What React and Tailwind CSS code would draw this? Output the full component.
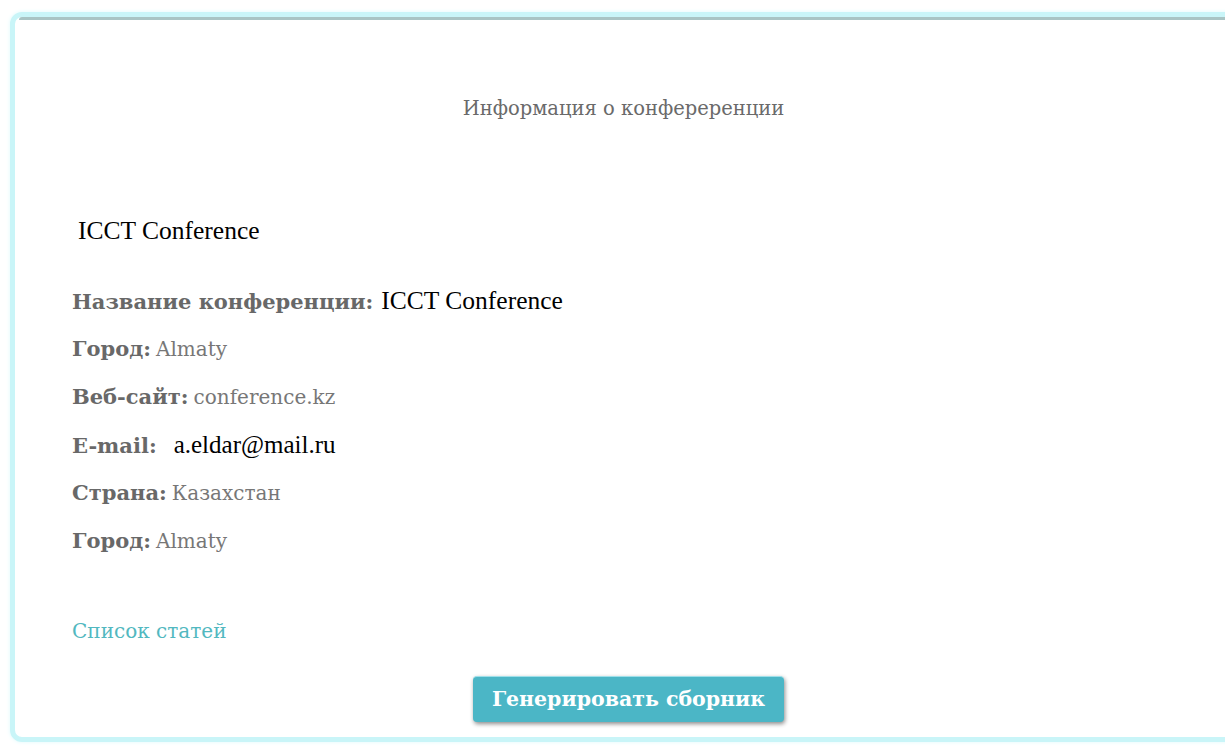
import React from 'react';

const cambria = { fontFamily: '"DejaVu Serif", "Liberation Serif", serif' };
const times = { fontFamily: '"Liberation Serif", "DejaVu Serif", serif' };

const rows = [
  { label: 'Город:', value: 'Almaty' },
  { label: 'Веб-сайт:', value: 'conference.kz' },
  { label: 'E-mail:', value: 'a.eldar@mail.ru', dark: true },
  { label: 'Страна:', value: 'Казахстан' },
  { label: 'Город:', value: 'Almaty' },
];

// Conference info card: title, name, field list, article link, build button
export default function App() {
  return (
    <div className="w-[1225px] h-[747px] bg-white overflow-hidden pt-[12px] pl-[10px] pb-[5px]" style={cambria}>
      <div className="h-[730px] w-[1230px] rounded-[12px] border-[5px] border-[#c9f5f8] bg-white shadow-[0_0_4px_#dffafc]">
        <div className="h-[3px] mx-[4px] bg-[#a9c4c4] rounded-t-[6px]" />
        <div className="flex flex-col pl-[57px] pr-[20px]">
          <h1 className="text-center text-[#6a6a6a] text-[19.5px] leading-[30px] mt-[74px] ml-[-40px]">Информация о конфереренции</h1>

          <div className="mt-[92px] ml-[6px] text-[25.5px] leading-[30px] text-black" style={times}>ICCT Conference</div>

          <div className="mt-[40px] flex flex-col gap-[18px]">
            <div className="flex items-baseline h-[30px] leading-[30px]">
              <span className="font-bold text-[21px] text-[#686868]">Название конференции:</span>
              <span className="text-black text-[25.5px] ml-[8px]" style={times}>ICCT Conference</span>
            </div>
            {rows.map((r, i) => (
              <div key={i} className="flex items-baseline h-[30px] leading-[30px]">
                <span className="font-bold text-[21px] text-[#686868]">{r.label}</span>
                {r.dark ? (
                  <span className="text-black text-[25px] ml-[17px]" style={times}>{r.value}</span>
                ) : (
                  <span className="text-[20px] text-[#777] ml-[5px]">{r.value}</span>
                )}
              </div>
            ))}
          </div>

          <a href="#" className="mt-[60px] text-[20px] leading-[30px] text-[#52b8c0]">Список статей</a>

          <div className="flex justify-center ml-[-30px] mt-[30px]">
            <button className="h-[46px] px-[19px] rounded-[4px] bg-[#4bb6c6] text-white font-bold text-[20.5px] border-t border-[#9fe0ea] shadow-[1px_2px_4px_rgba(0,0,0,0.45)]">
              Генерировать сборник
            </button>
          </div>
        </div>
      </div>
    </div>
  );
}
